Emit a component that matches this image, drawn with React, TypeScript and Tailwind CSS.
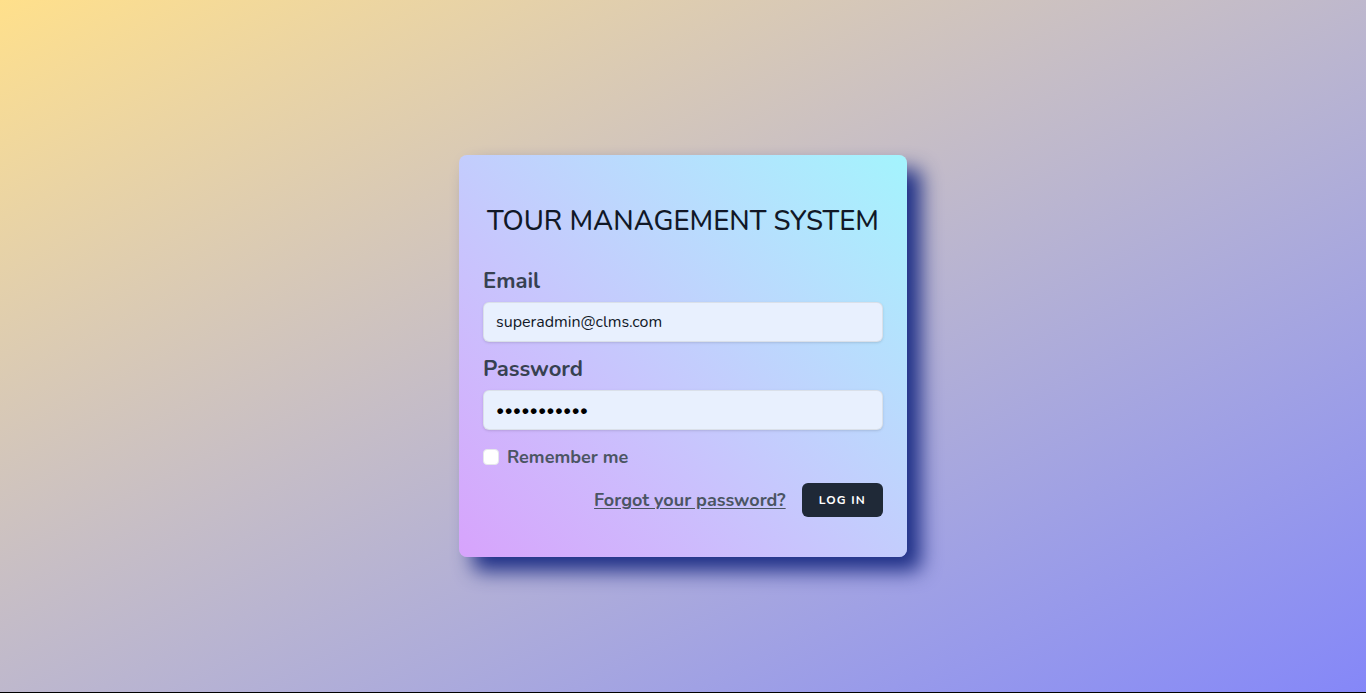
import { useState } from 'react'

const App = () => {
    const [remember, setRemember] = useState(false);

    return (
        <div
            className="h-[693px] w-full border-b border-black bg-linear-to-br from-[#ffe08b] to-[#8587f8] flex justify-center items-center pt-5"
            style={{ fontFamily: '"Nunito", "Lato", "Open Sans", sans-serif' }}
        >
            {/* login card */}
            <div className="w-[448px] rounded-lg bg-linear-to-tr from-[#d7a3fc] to-[#a3f4fd] px-6 pt-[50px] pb-10 shadow-[14px_14px_20px_#1e2f86]">
                <h1 className="text-center text-[27.5px] leading-8 font-medium text-[#111827]">
                    TOUR MANAGEMENT SYSTEM
                </h1>

                <form className="mt-[30px]" onSubmit={e => e.preventDefault()}>
                    {/* email */}
                    <label htmlFor="email" className="block text-[22px] leading-7 font-bold text-[#374151]">
                        Email
                    </label>
                    <input
                        id="email"
                        type="email"
                        defaultValue="superadmin@clms.com"
                        className="mt-[7px] block w-full h-10 rounded-md border border-[#d1d5db]/60 bg-[#e8f0fe] px-3 text-base text-[#111827] shadow-sm outline-none"
                    />

                    {/* password */}
                    <label htmlFor="password" className="mt-[13px] block text-[22px] leading-7 font-bold text-[#374151]">
                        Password
                    </label>
                    <input
                        id="password"
                        type="password"
                        defaultValue="superadmin1"
                        className="mt-[7px] block w-full h-10 rounded-md border border-[#d1d5db]/60 bg-[#e8f0fe] px-3 text-base text-black shadow-sm outline-none"
                    />

                    {/* remember me */}
                    <label className="mt-[15px] flex items-center h-6 cursor-pointer">
                        <input
                            type="checkbox"
                            checked={remember}
                            onChange={() => setRemember(p => !p)}
                            className="appearance-none w-4 h-4 rounded bg-white border border-[#e5e7eb]"
                        />
                        <span className="ml-2 text-lg font-bold text-[#4b5563]">Remember me</span>
                    </label>

                    {/* actions */}
                    <div className="mt-[14px] flex items-center justify-end">
                        <a href="#" className="text-lg font-bold text-[#4b5563] underline underline-offset-2">
                            Forgot your password?
                        </a>
                        <button
                            type="submit"
                            className="ml-4 h-[34px] px-[17px] rounded-md bg-[#1f2937] text-white text-xs font-bold tracking-widest uppercase"
                        >
                            Log in
                        </button>
                    </div>
                </form>
            </div>
        </div>
    );
}

export default App;
